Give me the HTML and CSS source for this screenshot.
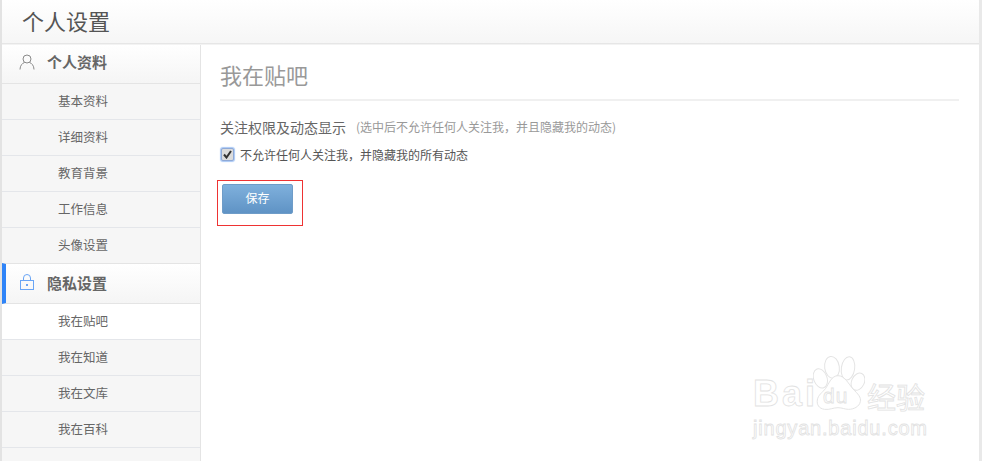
FILE: index.html
```html
<!DOCTYPE html>
<html lang="zh-CN">
<head>
<meta charset="utf-8">
<title>个人设置</title>
<link rel="stylesheet" href="styles.css">
</head>
<body>
<div class="page">
  <header class="top"><h1 class="top-title">个人设置</h1></header>
  <div class="layout">
    <nav class="side">
      <div class="group">
        <svg class="group-icon" width="16" height="16" viewBox="0 0 16 16" fill="none" stroke="#8a8a8a" stroke-width="1"><circle cx="8" cy="5" r="4"/><path d="M1 15.500c0-4 2.500-6.500 4.500-7M15 15.500c0-4-2.500-6.500-4.500-7"/></svg>
        <span class="group-name">个人资料</span>
      </div>
      <a class="item">基本资料</a>
      <a class="item">详细资料</a>
      <a class="item">教育背景</a>
      <a class="item">工作信息</a>
      <a class="item">头像设置</a>
      <div class="group group-on">
        <svg class="group-icon" width="16" height="16" viewBox="0 0 16 16" fill="none" stroke="#6aa5f5" stroke-width="1"><rect x="1.500" y="6.500" width="13" height="9"/><path d="M4.500 6.500V4a3.500 3.500 0 0 1 7 0v2.500"/><rect x="7" y="10" width="2" height="2" fill="#6aa5f5" stroke="none"/></svg>
        <span class="group-name">隐私设置</span>
      </div>
      <a class="item item-on">我在贴吧</a>
      <a class="item">我在知道</a>
      <a class="item">我在文库</a>
      <a class="item">我在百科</a>
    </nav>
    <main class="main">
      <h2 class="title">我在贴吧</h2>
      <p class="field"><span class="field-label">关注权限及动态显示</span><span class="field-note">(选中后不允许任何人关注我，并且隐藏我的动态)</span></p>
      <label class="check">
        <span class="box"><svg width="9" height="9" viewBox="0 0 9 9"><path d="M1 4.500 3.500 7.500 8 1" fill="none" stroke="#333" stroke-width="2"/></svg></span>
        <span>不允许任何人关注我，并隐藏我的所有动态</span>
      </label>
      <div class="mark"><button class="save" type="button">保存</button></div>
    </main>
  </div>
  <div class="wm">
    <svg class="paw" width="52" height="55" viewBox="0 0 156 165" fill="#fff" stroke="#e4e4e4" stroke-width="3">
      <ellipse cx="22" cy="70" rx="20" ry="30" transform="rotate(-20 22 70)"/>
      <ellipse cx="57" cy="37" rx="22" ry="33" transform="rotate(-8 57 37)"/>
      <ellipse cx="105" cy="40" rx="20" ry="35" transform="rotate(8 105 40)"/>
      <ellipse cx="135" cy="80" rx="19" ry="27" transform="rotate(25 135 80)"/>
      <path d="M75 62c20 0 32 25 45 40 15 15 25 25 22 38-3 15-20 23-35 23-12 0-20-5-32-5-15 0-25 7-40 5-18-2-24-15-22-28 2-15 15-22 25-35 10-15 18-38 37-38z"/>
    </svg>
    <div class="wm-row"><span class="wm-bai">Bai</span><span class="wm-du">du</span><span class="wm-jy">经验</span></div>
    <div class="wm-url">jingyan.baidu.com</div>
  </div>
</div>
</body>
</html>
```
FILE: styles.css
```css
* { box-sizing: border-box; }
html, body { margin: 0; padding: 0; height: 100%; overflow: hidden; }
body { background: #fff; font-family: "Noto Sans CJK SC", "Liberation Sans", sans-serif; color: #666; }
.page { position: relative; width: 982px; height: 461px; border-left: 2px solid #e3e3e3; border-right: 3px solid #e9e9e9; overflow: hidden; }
.top { position: relative; height: 44px; padding: 0 0 4px 20px; background: linear-gradient(#fff, #f6f6f6); border-bottom: 1px solid #e6e6e6; box-shadow: 0 1px 0 #f3f3f3; display: flex; align-items: center; }
.top-title { margin: 0; font-size: 22px; line-height: 40px; font-weight: 400; color: #555; }
.layout { display: flex; height: 417px; }
.side { width: 199px; flex: none; background: #f6f6f6; border-right: 1px solid #e4e4e4; }
.group { height: 40px; display: flex; align-items: center; padding: 0 0 4px 17px; background: linear-gradient(#fff, #f5f5f5); border-bottom: 1px solid #e4e4e4; }
.group-on { height: 41px; margin-top: -1px; border-left: 4px solid #2f84f8; padding-left: 13px; padding-bottom: 3px; border-top: 1px solid #e4e4e4; }
.group-icon { flex: none; }
.group-name { margin-left: 12px; font-size: 15px; font-weight: 700; color: #666; }
.item { display: block; height: 36px; line-height: 33px; padding-left: 56px; font-size: 12.500px; color: #666; border-bottom: 1px solid #e4e6ea; }
.item-on { background: #fff; }
.main { flex: 1; padding: 17px 20px 0 19px; }
.title { margin: 0; height: 40px; font-size: 22px; line-height: 26px; font-weight: 400; color: #999; border-bottom: 2px solid #f0f0f0; }
.field { margin: 15px 0 0; height: 22px; line-height: 22px; display: flex; align-items: center; }
.field-label { font-size: 14px; color: #666; }
.field-note { margin-left: 10px; font-size: 12px; color: #999; }
.check { margin-top: 7px; height: 18px; display: flex; align-items: center; font-size: 12px; color: #555; }
.box { width: 13px; height: 13px; margin: 0 6px 0 1px; display: flex; align-items: center; justify-content: center; background: #dcdcdc; border: 1px solid #8fa9d6; box-shadow: 0 0 1px 1px #a9c8f5; border-radius: 2px; }
.mark { width: 86px; height: 46px; margin: 17px 0 0 -3px; padding: 3px 0 0 4px; border: 1px solid #ee3333; }
.save { display: block; width: 71px; height: 30px; padding: 0 0 3px; font: inherit; font-size: 12px; color: #fff; background: linear-gradient(#7fb0dc, #5f93c5); border: 1px solid #6e9cc8; border-radius: 2px; }
.wm { position: absolute; left: 751px; top: 355px; width: 180px; height: 85px; }
.paw { position: absolute; left: 60px; top: 0; }
.wm-row { position: absolute; left: 0; top: 16px; width: 180px; height: 40px; }
.wm-bai, .wm-du, .wm-jy, .wm-url { position: absolute; color: #fff; -webkit-text-stroke: 0.800px #e2e2e2; font-family: "Liberation Sans", "Noto Sans CJK SC", sans-serif; }
.wm-bai { left: 0; top: 3px; font-size: 36px; line-height: 40px; font-weight: 700; letter-spacing: 3px; }
.wm-du { left: 70px; top: 13px; font-size: 21px; line-height: 24px; letter-spacing: 1px; }
.wm-jy { left: 114px; top: 9px; font-size: 29px; line-height: 32px; font-family: "Noto Sans CJK SC", sans-serif; }
.wm-url { left: 0; top: 62px; font-size: 20px; line-height: 22px; letter-spacing: 0.800px; }
```
